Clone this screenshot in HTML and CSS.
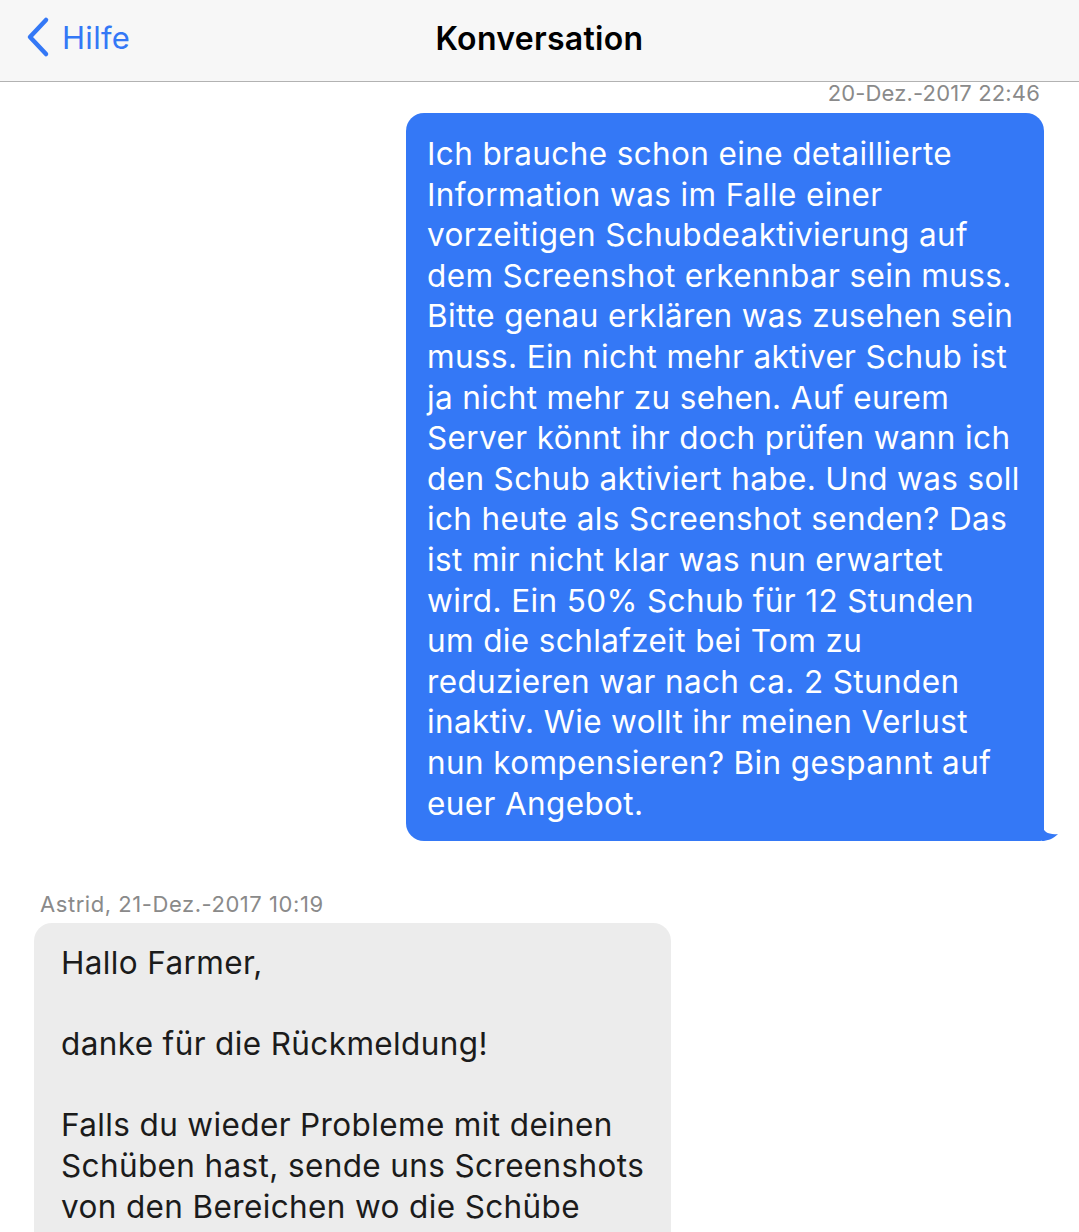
FILE: index.html
```html
<!DOCTYPE html>
<html lang="de">
<head>
  <meta charset="UTF-8">
  <meta name="viewport" content="width=device-width, initial-scale=1.0">
  <title>Konversation</title>
  <link rel="stylesheet" href="styles.css">
</head>
<body>

  <div class="screen">
    <div class="nav-bar">
      <a class="back-link" href="#">
        <svg class="back-icon" width="26" height="42" viewBox="0 0 26 42">
          <path d="M22 4 L6 21 L22 38" fill="none" stroke="#3478f6" stroke-width="4.5" stroke-linecap="round" stroke-linejoin="round"/>
        </svg>
        <span>Hilfe</span>
      </a>
      <h1 class="nav-title">Konversation</h1>
    </div>

    <div class="conversation">
      <div class="message outgoing">
        <div class="message-meta">20-Dez.-2017 22:46</div>
        <div class="bubble bubble-blue">
          Ich brauche schon eine detaillierte<br>
          Information was im Falle einer<br>
          vorzeitigen Schubdeaktivierung auf<br>
          dem Screenshot erkennbar sein muss.<br>
          Bitte genau erklären was zusehen sein<br>
          muss. Ein nicht mehr aktiver Schub ist<br>
          ja nicht mehr zu sehen. Auf eurem<br>
          Server könnt ihr doch prüfen wann ich<br>
          den Schub aktiviert habe. Und was soll<br>
          ich heute als Screenshot senden? Das<br>
          ist mir nicht klar was nun erwartet<br>
          wird. Ein 50% Schub für 12 Stunden<br>
          um die schlafzeit bei Tom zu<br>
          reduzieren war nach ca. 2 Stunden<br>
          inaktiv. Wie wollt ihr meinen Verlust<br>
          nun kompensieren? Bin gespannt auf<br>
          euer Angebot.
          <svg class="tail" width="18" height="16" viewBox="0 0 18 16">
            <path d="M0 0 C1 7 7 10 16 9 C11 14 5 16 0 16 Z" fill="#3478f6"/>
          </svg>
        </div>
      </div>

      <div class="message incoming">
        <div class="message-meta">Astrid, 21-Dez.-2017 10:19</div>
        <div class="bubble bubble-gray">
          Hallo Farmer,<br>
          <br>
          danke für die Rückmeldung!<br>
          <br>
          Falls du wieder Probleme mit deinen<br>
          Schüben hast, sende uns Screenshots<br>
          von den Bereichen wo die Schübe<br>
          nicht mehr angezeigt werden.
        </div>
      </div>
    </div>
  </div>

</body>
</html>
```

FILE: styles.css
```css
body {
  margin: 0;
  padding: 0;
  background-color: #ffffff;
  font-family: Inter, "Noto Sans", Arial, sans-serif;
  overflow: hidden;
}
.screen {
  width: 1079px;
  height: 1232px;
  overflow: hidden;
  background-color: #ffffff;
}
.nav-bar {
  position: relative;
  height: 81px;
  display: flex;
  align-items: center;
  justify-content: center;
  background-color: #f7f7f7;
  border-bottom: 1.5px solid #b2b2b2;
}
.back-link {
  position: absolute;
  left: 24px;
  top: 16px;
  display: flex;
  align-items: center;
  gap: 12px;
  color: #3478f6;
  text-decoration: none;
  font-size: 31px;
  letter-spacing: 0.3px;
}
.back-icon {
  display: block;
}
.nav-title {
  margin: 0 0 5px 0;
  font-size: 32px;
  font-weight: 600;
  color: #000000;
  letter-spacing: 0.3px;
}
.conversation {
  display: flex;
  flex-direction: column;
  padding: 0 35px 0 34px;
}
.message {
  display: flex;
  flex-direction: column;
}
.message-meta {
  font-size: 22px;
  color: #8a8a8a;
  line-height: 26px;
}
.outgoing {
  align-items: flex-end;
}
.outgoing .message-meta {
  margin-top: -2px;
  margin-right: 4px;
  margin-bottom: 7px;
  letter-spacing: 0.15px;
}
.incoming {
  align-items: flex-start;
  margin-top: 50px;
}
.incoming .message-meta {
  margin-left: 6px;
  margin-bottom: 6px;
  letter-spacing: 0.55px;
}
.bubble {
  position: relative;
  font-size: 31.5px;
  line-height: 40.6px;
  white-space: nowrap;
  letter-spacing: 0.37px;
}
.bubble-blue {
  width: 596px;
  padding: 21px 21px 17px 21px;
  background-color: #3478f6;
  color: #ffffff;
  border-radius: 18px 18px 4px 18px;
}
.bubble-gray {
  width: 584px;
  padding: 20px 26px 20px 27px;
  background-color: #ececec;
  color: #1b1b1b;
  border-radius: 18px;
}
.tail {
  position: absolute;
  right: -16px;
  bottom: 0;
}
```
